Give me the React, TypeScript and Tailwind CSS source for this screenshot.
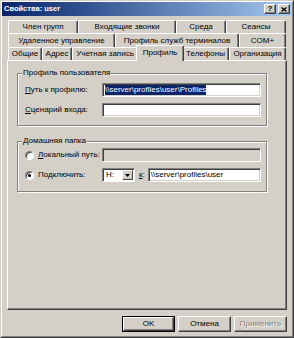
import React from "react";

function Tab({ className, children }: { className: string; children: React.ReactNode }) {
  return (
    <div
      className={`${className} shrink-0 h-full flex items-center justify-center border-t border-l border-white border-r border-r-[#404040] shadow-[inset_-1px_0_0_#808080] rounded-t-[2px] whitespace-nowrap overflow-hidden leading-none`}
    >
      {children}
    </div>
  );
}

function Field({ className, children, disabled }: { className?: string; children?: React.ReactNode; disabled?: boolean }) {
  return (
    <div
      className={`h-[14px] border border-[#808080] border-r-white border-b-white shadow-[inset_1px_1px_0_#404040,inset_-1px_-1px_0_#d4d0c8] ${disabled ? "bg-[#d4d0c8]" : "bg-white"} flex items-center pl-[2px] overflow-hidden whitespace-nowrap leading-none ${className ?? ""}`}
    >
      {children}
    </div>
  );
}

function Radio({ checked }: { checked?: boolean }) {
  return (
    <div className="w-[9px] h-[9px] shrink-0 rounded-full bg-white border border-[#808080] border-r-white border-b-white shadow-[inset_1px_1px_0_#404040] flex items-center justify-center">
      {checked ? <div className="w-[3px] h-[3px] rounded-full bg-black" /> : null}
    </div>
  );
}

function Btn({ children, className }: { children: React.ReactNode; className?: string }) {
  return (
    <div
      className={`w-full h-full bg-[#d4d0c8] border border-white border-r-[#404040] border-b-[#404040] shadow-[inset_-1px_-1px_0_#808080] flex items-center justify-center leading-none ${className ?? ""}`}
    >
      {children}
    </div>
  );
}

export default function App() {
  return (
    <div className="w-[294px] h-[338px] bg-[#d4d0c8] border border-[#d4d0c8] border-r-[#404040] border-b-[#404040] font-['Liberation_Sans',Arial,sans-serif] text-[8px] text-black">
      <div className="h-full border border-white border-r-[#808080] border-b-[#808080] flex flex-col">
        {/* title bar */}
        <div className="h-[14px] shrink-0 flex items-center bg-linear-to-r from-[#0a246a] to-[#a6caf0] pl-[2px] pr-[2px]">
          <span className="text-white font-bold text-[7.5px] leading-none">Свойства: user</span>
          <div className="ml-auto flex gap-[2px]">
            <div className="w-[12px] h-[10px]">
              <Btn className="font-bold text-[8px]">?</Btn>
            </div>
            <div className="w-[12px] h-[10px]">
              <Btn>
                <svg width="6" height="5" viewBox="0 0 6 5">
                  <path d="M0.5 0.5 L5.5 4.5 M5.5 0.5 L0.5 4.5" stroke="#000" strokeWidth="1.3" />
                </svg>
              </Btn>
            </div>
          </div>
        </div>

        <div className="flex-1 flex flex-col px-[5px] pt-[4px]">
          {/* tabs */}
          <div className="mx-[1px] flex h-[13px]">
            <Tab className="w-[70px]">Член групп</Tab>
            <Tab className="w-[98px]">Входящие звонки</Tab>
            <Tab className="w-[50px]">Среда</Tab>
            <Tab className="w-[60px]">Сеансы</Tab>
          </div>
          <div className="mx-[1px] flex h-[14px]">
            <Tab className="w-[107px]">Удаленное управление</Tab>
            <Tab className="w-[124px]">Профиль служб терминалов</Tab>
            <Tab className="w-[47px]">COM+</Tab>
          </div>
          <div className="mx-[1px] flex h-[13px] items-start">
            <Tab className="w-[34px]">Общие</Tab>
            <Tab className="w-[30px]">Адрес</Tab>
            <Tab className="w-[66px]">Учетная запись</Tab>
            <div className="relative z-10 -mt-[2px] -mx-[2px] w-[48px] h-[16px] shrink-0 bg-[#d4d0c8] flex items-center justify-center border-t border-l border-white border-r border-r-[#404040] shadow-[inset_-1px_0_0_#808080] rounded-t-[2px] leading-none pb-[2px]">
              Профиль
            </div>
            <Tab className="w-[47px]">Телефоны</Tab>
            <Tab className="w-[57px]">Организация</Tab>
          </div>

          {/* panel */}
          <div className="h-[250px] shrink-0 border border-white border-r-[#404040] border-b-[#404040] shadow-[inset_-1px_-1px_0_#808080] pl-[9px] pr-[19px] pt-[7px] flex flex-col">
            <fieldset className="border border-[#808080] shadow-[inset_1px_1px_0_#fff,1px_1px_0_#fff] m-0 p-0">
              <legend className="ml-[4px] px-[1px] bg-[#d4d0c8] leading-[10px]">Профиль пользователя</legend>
              <div className="pt-[5px] pl-[7px] pr-[5px] pb-[8px] flex flex-col gap-[6px]">
                <div className="flex items-center h-[14px]">
                  <div className="w-[77px] shrink-0 leading-none">
                    <span className="underline">П</span>уть к профилю:
                  </div>
                  <Field className="flex-1">
                    <span className="bg-[#0a246a] text-white leading-[10px]">\\server\profiles\user\Profiles</span>
                  </Field>
                </div>
                <div className="flex items-center h-[14px]">
                  <div className="w-[77px] shrink-0 leading-none">
                    <span className="underline">С</span>ценарий входа:
                  </div>
                  <Field className="flex-1" />
                </div>
              </div>
            </fieldset>

            <fieldset className="mt-[10px] border border-[#808080] shadow-[inset_1px_1px_0_#fff,1px_1px_0_#fff] m-0 p-0">
              <legend className="ml-[4px] px-[1px] bg-[#d4d0c8] leading-[10px]">
                <span className="underline">Д</span>омашняя папка
              </legend>
              <div className="pt-[2px] pl-[7px] pr-[5px] pb-[9px] flex flex-col gap-[6px]">
                <div className="flex items-center h-[14px]">
                  <div className="w-[77px] shrink-0 flex items-center gap-[4px] leading-none">
                    <Radio />
                    <span>
                      <span className="underline">Л</span>окальный путь:
                    </span>
                  </div>
                  <Field className="flex-1" disabled />
                </div>
                <div className="flex items-center h-[14px]">
                  <div className="w-[77px] shrink-0 flex items-center gap-[4px] leading-none">
                    <Radio checked />
                    <span>Подключить:</span>
                  </div>
                  <div className="w-[33px] h-[14px] shrink-0 border border-[#808080] border-r-white border-b-white shadow-[inset_1px_1px_0_#404040] bg-white flex items-stretch p-[1px]">
                    <span className="flex-1 pl-[2px] flex items-center leading-none">H:</span>
                    <div className="w-[11px] bg-[#d4d0c8] border border-white border-r-[#404040] border-b-[#404040] flex items-center justify-center">
                      <svg width="5" height="3" viewBox="0 0 5 3">
                        <path d="M0 0 H5 L2.5 3 Z" fill="#000" />
                      </svg>
                    </div>
                  </div>
                  <span className="ml-[4px] leading-none">
                    <span className="underline">к</span>:
                  </span>
                  <Field className="flex-1 ml-[3px]">\\server\profiles\user</Field>
                </div>
              </div>
            </fieldset>
          </div>

          {/* buttons */}
          <div className="mt-[6px] flex justify-end gap-[3px]">
            <div className="w-[53px] h-[16px] border border-black">
              <Btn>OK</Btn>
            </div>
            <div className="w-[53px] h-[16px]">
              <Btn>Отмена</Btn>
            </div>
            <div className="w-[53px] h-[16px]">
              <Btn className="text-[#808080] [text-shadow:1px_1px_0_#fff]">Применить</Btn>
            </div>
          </div>
        </div>
      </div>
    </div>
  );
}
